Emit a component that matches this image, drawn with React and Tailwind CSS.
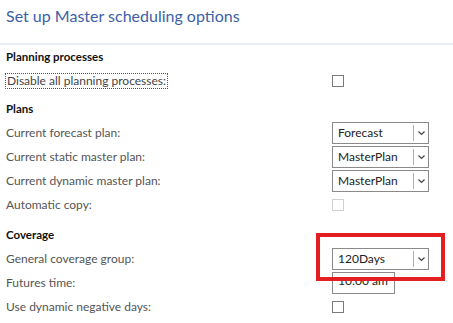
import React from "react";

const font = { fontFamily: 'Lato, "Open Sans", sans-serif' };

function Chevron() {
  return (
    <svg width="9" height="6" viewBox="0 0 9 6" className="block">
      <path d="M1.5 1.5 L4.5 4.5 L7.5 1.5" fill="none" stroke="#444" strokeWidth="1.2" />
    </svg>
  );
}

function Dropdown({ value }) {
  return (
    <div className="flex h-[22px] w-[97px] items-stretch border border-[#8a8a8a] bg-white">
      <div className="flex flex-1 items-center pl-[5px] text-[12px] text-[#222]">{value}</div>
      <div className="my-[2px] w-px bg-[#b0b0b0]" />
      <div className="flex w-[14px] items-center justify-center">
        <Chevron />
      </div>
    </div>
  );
}

function Checkbox({ disabled }) {
  return (
    <div
      className={
        "h-[12px] w-[12px] border bg-white " +
        (disabled ? "border-[#d0d0d0]" : "border-[#7a7a7a]")
      }
    />
  );
}

function Row({ label, children, focus }) {
  return (
    <div className="flex h-[24px] items-center">
      <div className="w-[332px] pl-[6px]">
        {focus ? (
          <span className="-ml-[1px] inline-block border border-dotted border-[#555] pr-[1px] pl-[1px] leading-[14px] text-[#444]">
            {label}
          </span>
        ) : (
          <span className="text-[#555]">{label}</span>
        )}
      </div>
      <div className="flex items-center">{children}</div>
    </div>
  );
}

function Heading({ children }) {
  return (
    <div className="flex h-[24px] items-center pl-[6px] text-[11.5px] font-bold text-[#111]">
      {children}
    </div>
  );
}

export default function App() {
  return (
    <div className="relative h-[323px] w-[453px] overflow-hidden bg-white text-[12px]" style={font}>
      <div className="flex h-[43px] items-start pl-[6px] pt-[4px] text-[16px] text-[#3d5fa8]">
        Set up Master scheduling options
      </div>
      <div className="h-[2px] bg-[#e9ecf0]" />
      <Heading>Planning processes</Heading>
      <Row label="Disable all planning processes:" focus>
        <Checkbox />
      </Row>
      <div className="h-[4px]" />
      <Heading>Plans</Heading>
      <Row label="Current forecast plan:">
        <Dropdown value="Forecast" />
      </Row>
      <Row label="Current static master plan:">
        <Dropdown value="MasterPlan" />
      </Row>
      <Row label="Current dynamic master plan:">
        <Dropdown value="MasterPlan" />
      </Row>
      <Row label="Automatic copy:">
        <Checkbox disabled />
      </Row>
      <div className="h-[6px]" />
      <Heading>Coverage</Heading>
      <Row label="General coverage group:">
        <Dropdown value="120Days" />
      </Row>
      <Row label="Futures time:">
        <div className="flex h-[22px] w-[63px] items-start border border-[#8a8a8a] bg-white pl-[5px] leading-[16px] text-[#222]">
          10:00 am
        </div>
      </Row>
      <Row label="Use dynamic negative days:">
        <Checkbox />
      </Row>
      <div className="absolute left-[316px] top-[233px] h-[48px] w-[129px] border-[4px] border-[#e41f22]" />
    </div>
  );
}
